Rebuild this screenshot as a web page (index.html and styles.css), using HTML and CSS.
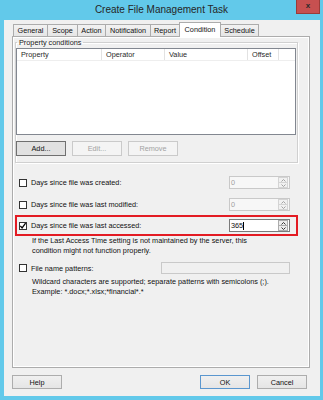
FILE: index.html
```html
<!DOCTYPE html>
<html>
<head>
<meta charset="utf-8">
<link rel="stylesheet" href="styles.css">
</head>
<body>
<div class="window">
  <div class="titlebar">
    <span></span>
    <div class="title">Create File Management Task</div>
    <div class="close">x</div>
  </div>
  <div class="client">
    <div class="tabs">
      <div class="tab w-general">General</div>
      <div class="tab w-scope">Scope</div>
      <div class="tab w-action">Action</div>
      <div class="tab w-notif">Notification</div>
      <div class="tab w-report">Report</div>
      <div class="tab active w-cond">Condition</div>
      <div class="tab w-sched">Schedule</div>
    </div>
    <div class="panel">
      <fieldset class="group">
        <legend>Property conditions</legend>
        <div class="list">
          <div class="list-head">
            <div class="col c-prop">Property</div>
            <div class="col c-op">Operator</div>
            <div class="col c-val">Value</div>
            <div class="col c-off">Offset</div>
          </div>
        </div>
        <div class="btn-row">
          <div class="btn btn-focus">Add...</div>
          <div class="btn disabled">Edit...</div>
          <div class="btn disabled">Remove</div>
        </div>
      </fieldset>

      <div class="opt first">
        <span class="cb"></span>
        <span class="label">Days since file was created:</span>
        <div class="spin disabled">
          <span class="val">0</span>
          <span class="arrows">
            <span class="arr"><svg width="5" height="3" viewBox="0 0 5 3"><path d="M0.5 2.5 L2.5 0.5 L4.5 2.5" fill="none" stroke="#9a9a9a" stroke-width="0.9"/></svg></span>
            <span class="arr"><svg width="5" height="3" viewBox="0 0 5 3"><path d="M0.5 0.5 L2.5 2.5 L4.5 0.5" fill="none" stroke="#9a9a9a" stroke-width="0.9"/></svg></span>
          </span>
        </div>
      </div>

      <div class="opt second">
        <span class="cb"></span>
        <span class="label">Days since file was last modified:</span>
        <div class="spin disabled">
          <span class="val">0</span>
          <span class="arrows">
            <span class="arr"><svg width="5" height="3" viewBox="0 0 5 3"><path d="M0.5 2.5 L2.5 0.5 L4.5 2.5" fill="none" stroke="#9a9a9a" stroke-width="0.9"/></svg></span>
            <span class="arr"><svg width="5" height="3" viewBox="0 0 5 3"><path d="M0.5 0.5 L2.5 2.5 L4.5 0.5" fill="none" stroke="#9a9a9a" stroke-width="0.9"/></svg></span>
          </span>
        </div>
      </div>

      <div class="opt highlight">
        <span class="cb checked"><svg width="8" height="8" viewBox="0 0 8 8"><path d="M1.3 3.8 L3.1 5.9 L6.6 1.2" fill="none" stroke="#000" stroke-width="1.3"/></svg></span>
        <span class="label">Days since file was last accessed:</span>
        <div class="spin">
          <span class="val">365<span class="caret"></span></span>
          <span class="arrows">
            <span class="arr"><svg width="5" height="3" viewBox="0 0 5 3"><path d="M0.5 2.5 L2.5 0.5 L4.5 2.5" fill="none" stroke="#222" stroke-width="0.9"/></svg></span>
            <span class="arr"><svg width="5" height="3" viewBox="0 0 5 3"><path d="M0.5 0.5 L2.5 2.5 L4.5 0.5" fill="none" stroke="#222" stroke-width="0.9"/></svg></span>
          </span>
        </div>
      </div>

      <div class="desc">If the Last Access Time setting is not maintained by the server, this<br>condition might not function properly.</div>

      <div class="opt fourth">
        <span class="cb"></span>
        <span class="label">File name patterns:</span>
        <div class="textbox"></div>
      </div>

      <div class="desc tight">Wildcard characters are supported; separate patterns with semicolons (;).<br>Example: *.docx;*.xlsx;*financial*.*</div>
    </div>
    <div class="footer">
      <div class="btn">Help</div>
      <span class="grow"></span>
      <div class="btn btn-default">OK</div>
      <div class="btn">Cancel</div>
    </div>
  </div>
</div>
</body>
</html>
```
FILE: styles.css
```css
html, body {
  margin: 0;
  padding: 0;
}
body {
  width: 323px;
  height: 400px;
  overflow: hidden;
  background: #62c9ea;
  font-family: "Liberation Sans", Arial, sans-serif;
  font-size: 7.3px;
  color: #111;
}
.window {
  height: 400px;
  box-sizing: border-box;
  padding: 0 3px 4px 4px;
  display: flex;
  flex-direction: column;
}
.titlebar {
  height: 20px;
  margin: 0 -3px 0 -4px;
  padding-right: 3px;
  display: grid;
  grid-template-columns: 27px 1fr 24px;
  align-items: start;
}
.title {
  text-align: center;
  font-size: 10px;
  line-height: 20px;
  color: #262626;
}
.close {
  height: 14px;
  box-sizing: border-box;
  background: #c75050;
  border: 1px solid #9b3b38;
  border-top: none;
  color: #2a2a2a;
  font-weight: bold;
  font-size: 8px;
  line-height: 12px;
  text-align: center;
}
.client {
  flex: 1;
  background: #f0f0f0;
  padding: 2px 10px 7px 8px;
  display: flex;
  flex-direction: column;
}
.tabs {
  height: 14px;
  display: flex;
  align-items: flex-end;
  padding-left: 1px;
  position: relative;
  z-index: 1;
}
.tab {
  height: 12px;
  box-sizing: border-box;
  border: 1px solid #acacac;
  border-bottom: none;
  margin-right: -1px;
  background: linear-gradient(#f2f2f2, #e6e6e6);
  display: flex;
  align-items: center;
  justify-content: center;
  white-space: nowrap;
}
.tab.active {
  height: 15px;
  margin-bottom: -1px;
  background: #fff;
  padding-bottom: 2px;
}
.w-general { width: 35px; }
.w-scope { width: 31px; }
.w-action { width: 29px; }
.w-notif { width: 46px; }
.w-report { width: 30px; }
.w-cond { width: 42px; }
.w-sched { width: 39px; }
.panel {
  height: 332px;
  box-sizing: border-box;
  border: 1px solid #acacac;
  box-shadow: inset 1px 1px #fff, inset -1px -1px #fff;
  display: flex;
  flex-direction: column;
}
.group {
  margin: 1px 11px 0 2px;
  padding: 1px 1px 6px 0;
  border: 1px solid #d0d0d0;
  box-shadow: 1px 1px #fff, inset 1px 1px #fff;
  min-width: 0;
}
.group legend {
  padding: 0 2px;
  margin-left: 1px;
  line-height: 9px;
  color: #1a1a1a;
}
.list {
  height: 87px;
  box-sizing: border-box;
  border: 1px solid #828790;
  background: #fff;
}
.list-head {
  display: flex;
  height: 12px;
  border-bottom: 1px solid #eeeeee;
  box-sizing: border-box;
}
.col {
  box-sizing: border-box;
  border-right: 1px solid #e2e2e2;
  padding-left: 4px;
  line-height: 11px;
  color: #2a2a2a;
}
.c-prop { width: 85px; }
.c-op { width: 63px; }
.c-val { width: 83px; }
.c-off { width: 31px; }
.btn-row {
  display: flex;
  gap: 6px;
  margin-top: 6px;
}
.btn {
  width: 50px;
  height: 15px;
  box-sizing: border-box;
  border: 1px solid #adadad;
  background: linear-gradient(#f0f0f0, #e5e5e5);
  display: flex;
  align-items: center;
  justify-content: center;
  color: #111;
}
.btn-focus {
  border-color: #707070;
  background: #e1e1e1;
}
.btn.disabled {
  border-color: #cacaca;
  background: #f4f4f4;
  color: #a3a3a3;
}
.btn-default {
  border-color: #5b97cf;
}
.opt {
  display: flex;
  align-items: center;
  height: 13px;
  margin: 0 11px 0 2px;
  padding: 0 8px 0 4px;
}
.opt.first { margin-top: 13px; }
.opt.second { margin-top: 9px; }
.opt.highlight {
  height: 21px;
  box-sizing: border-box;
  margin-top: 4px;
  border: 2px solid #e31b23;
  padding: 0 6px 0 2px;
}
.opt.fourth {
  height: 12px;
  margin-top: 6px;
}
.cb {
  width: 8px;
  height: 8px;
  box-sizing: border-box;
  border: 1px solid #333;
  background: #fff;
  margin-right: 4px;
  flex: none;
  position: relative;
}
.cb.checked svg {
  position: absolute;
  left: -1px;
  top: -1px;
}
.label {
  flex: 1;
  white-space: nowrap;
}
.spin {
  width: 61px;
  height: 13px;
  box-sizing: border-box;
  border: 1px solid #7a7a7a;
  background: #fff;
  display: flex;
  align-items: stretch;
}
.spin.disabled {
  border-color: #c9c9c9;
  background: #f7f7f7;
}
.spin .val {
  flex: 1;
  padding-left: 1px;
  line-height: 11px;
  color: #111;
  display: flex;
  align-items: center;
}
.spin.disabled .val {
  color: #a0a0a0;
}
.caret {
  width: 1px;
  height: 8px;
  background: #000;
  margin-left: 0;
}
.arrows {
  width: 10px;
  display: flex;
  flex-direction: column;
  gap: 0;
  padding: 0 1px 0 0;
}
.arr {
  flex: 1;
  box-sizing: border-box;
  border: 1px solid #d4d4d4;
  background: #f1f1f1;
  display: flex;
  align-items: center;
  justify-content: center;
}
.arr + .arr {
  border-top: none;
}
.spin:not(.disabled) .arr {
  border-color: #acacac;
  background: #ececec;
}
.desc {
  margin-left: 19px;
  line-height: 10px;
  white-space: nowrap;
  color: #111;
}
.desc.tight {
  margin-top: 3px;
}
.textbox {
  width: 129px;
  height: 12px;
  box-sizing: border-box;
  border: 1px solid #c9c9c9;
  background: #f0f0f0;
}
.footer {
  display: flex;
  gap: 7px;
  margin-top: 7px;
  padding-right: 3px;
}
.footer .btn {
  height: 14px;
}
.grow {
  flex: 1;
}
```
